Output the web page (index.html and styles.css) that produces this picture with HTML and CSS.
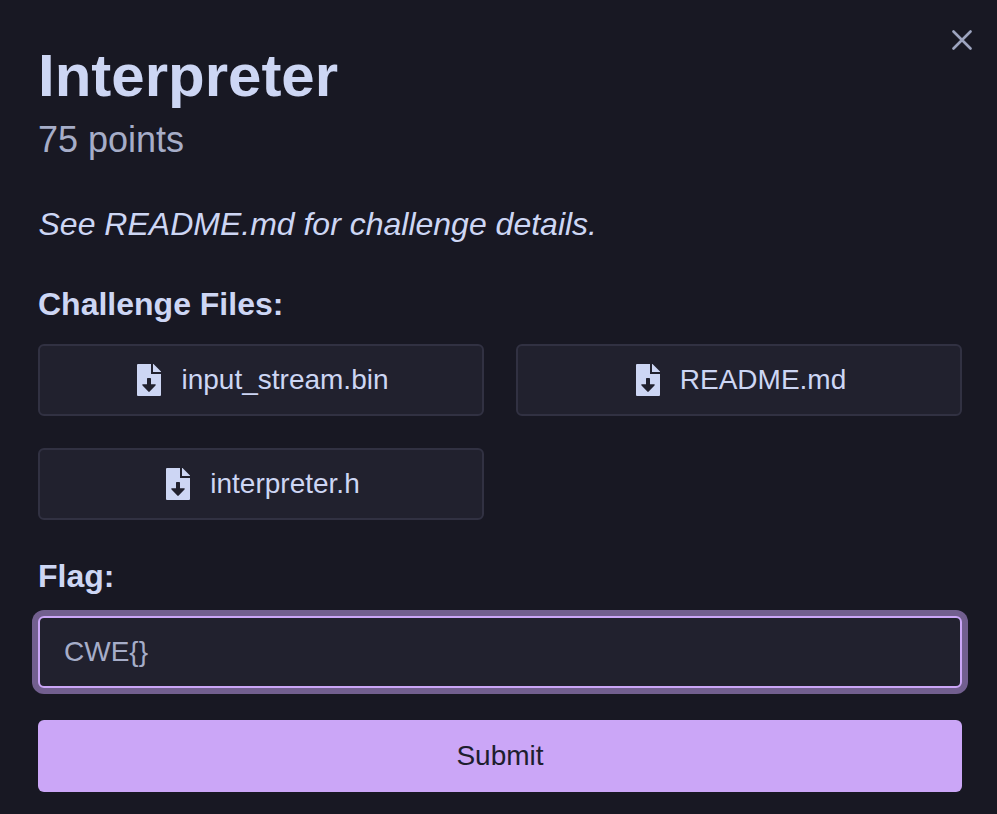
FILE: index.html
```html
<!DOCTYPE html>
<html lang="en">
<head>
<meta charset="utf-8">
<title>Interpreter</title>
<link rel="stylesheet" href="styles.css">
</head>
<body>
<svg class="defs" aria-hidden="true"><symbol id="file" viewBox="0 0 24 32"><path fill-rule="evenodd" d="M1 0H14V10H24V31Q24 32 23 32H1Q0 32 0 31V1Q0 0 1 0ZM10.700 14Q10 14 10 14.700V20.300H6Q4.600 20.300 5.500 21.400L11.300 27.600Q12 28.300 12.700 27.600L18.500 21.400Q19.400 20.300 18 20.300H14V14.700Q14 14 13.300 14Z"/><path d="M16 0H16.500L24 7.500V8H16Z"/></symbol></svg>
<main class="modal">
  <button class="close" aria-label="Close"><svg viewBox="0 0 20 20"><path d="M1.500 1.500L18.500 18.500M18.500 1.500L1.500 18.500"/></svg></button>
  <header class="head">
    <h1>Interpreter</h1>
    <p class="points">75 points</p>
  </header>
  <p class="details">See README.md for challenge details.</p>
  <h2>Challenge Files:</h2>
  <div class="files">
    <a class="file"><svg><use href="#file"/></svg><span>input_stream.bin</span></a>
    <a class="file"><svg><use href="#file"/></svg><span>README.md</span></a>
    <a class="file"><svg><use href="#file"/></svg><span>interpreter.h</span></a>
  </div>
  <h2 class="flag-title">Flag:</h2>
  <input class="flag" type="text" placeholder="CWE{}">
  <button class="submit">Submit</button>
</main>
</body>
</html>
```
FILE: styles.css
```css
* { box-sizing: border-box; margin: 0; }
body {
  background: #181823;
  color: #cdd6f4;
  font-family: "Liberation Sans", Arial, sans-serif;
  overflow: hidden;
}
.defs { display: none; }
.modal {
  position: relative;
  height: 814px;
  padding: 40px 35px 22px 38px;
  display: flex;
  flex-direction: column;
}
.close {
  position: absolute;
  top: 30px;
  right: 25px;
  width: 20px;
  height: 20px;
  padding: 0;
  border: 0;
  background: none;
}
.close svg { display: block; width: 20px; height: 20px; fill: none; stroke: #9da4bf; stroke-width: 2.6; stroke-linecap: round; }
h1 { font-size: 60px; line-height: 72px; }
.points { font-size: 36px; line-height: 56px; color: #a6adc8; }
.details { margin-top: 32px; padding-left: 0.5px; font-size: 32px; line-height: 48px; font-style: italic; }
h2 { margin-top: 32px; font-size: 32px; line-height: 48px; }
.files {
  margin-top: 16px;
  display: grid;
  grid-template-columns: 1fr 1fr;
  gap: 32px;
}
.file {
  height: 72px;
  padding-left: 4px;
  display: flex;
  align-items: center;
  justify-content: center;
  gap: 20px;
  border: 2px solid #313142;
  border-radius: 6px;
  background: #21212e;
  font-size: 28px;
}
.file svg { width: 24px; height: 32px; fill: #cdd6f4; }
.flag {
  height: 72px;
  margin-top: 16px;
  padding: 0 24px;
  border: 2px solid #cba6f7;
  border-radius: 6px;
  outline: 0;
  background: #21212e;
  box-shadow: 0 0 0 6px #725f8f;
  font: 28px "Liberation Sans", Arial, sans-serif;
  color: #cdd6f4;
}
.flag::placeholder { color: #a6adc8; opacity: 1; }
.submit {
  height: 72px;
  margin-top: 32px;
  border: 0;
  border-radius: 6px;
  background: #cba6f7;
  color: #1e1e2e;
  font: 28px "Liberation Sans", Arial, sans-serif;
}
```
